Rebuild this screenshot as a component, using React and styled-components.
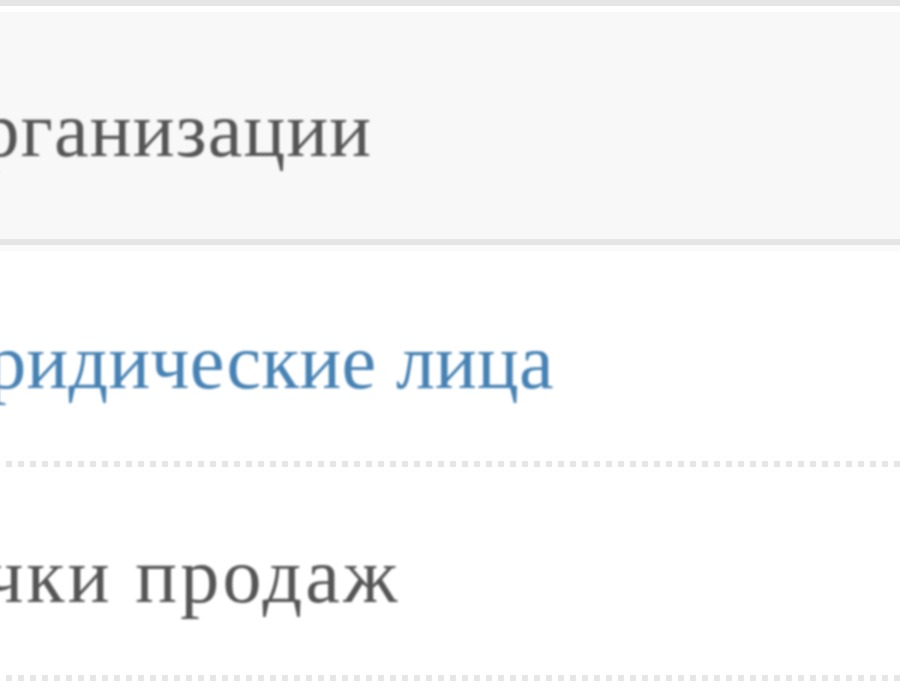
import React from "react";
import styled, { createGlobalStyle } from "styled-components";

const Global = createGlobalStyle`
  html, body { margin: 0; padding: 0; background: #ffffff; overflow: hidden; }
  body { font-family: "Liberation Serif", "Times New Roman", serif; }
`;

const Menu = styled.nav`
  width: 900px;
  height: 700px;
  overflow: hidden;
  background: #ffffff;
`;

const Header = styled.div`
  display: flex;
  align-items: center;
  height: 227px;
  border-top: 6px solid #e5e5e5;
  border-bottom: 6px solid #e5e5e5;
  box-shadow: inset 0 6px 0 #ffffff;
  padding-top: 6px;
  background: #f8f8f8;
`;

const List = styled.ul`
  list-style: none;
  margin: 0;
  padding: 0;
  border-top: 6px solid #fafafa;
`;

const Item = styled.li`
  display: flex;
  align-items: center;
  height: ${(p) => p.$h}px;
  background-image: repeating-linear-gradient(
    to right,
    transparent 0 6px,
    #e6e6e6 6px 12px
  );
  background-size: 100% 6px;
  background-position: left bottom;
  background-repeat: no-repeat;
  padding-bottom: 6px;
`;

const Label = styled.span`
  margin-left: ${(p) => p.$offset}px;
  padding-top: ${(p) => p.$drop || 9}px;
  font-size: 78px;
  line-height: 1;
  letter-spacing: ${(p) => p.$spacing || 0}px;
  white-space: nowrap;
  color: ${(p) => (p.$link ? "#4682b4" : "#555555")};
  filter: blur(1.2px);
`;

export default function App() {
  return (
    <>
      <Global />
      <Menu>
        <Header>
          <Label $offset={-77} $spacing={1.2}>Организации</Label>
        </Header>
        <List>
          <Item $h={210}>
            <Label $offset={-93} $spacing={0.2} $drop={12} $link>Юридические лица</Label>
          </Item>
          <Item $h={208}>
            <Label $offset={-101} $spacing={3.2}>Точки продаж</Label>
          </Item>
        </List>
      </Menu>
    </>
  );
}
